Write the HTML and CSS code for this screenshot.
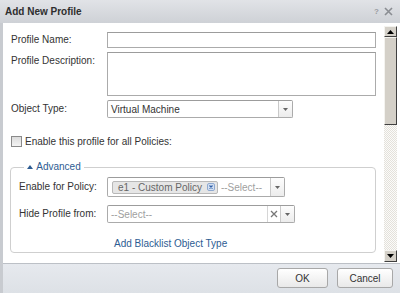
FILE: index.html
```html
<!DOCTYPE html>
<html>
<head>
<meta charset="utf-8">
<link rel="stylesheet" href="styles.css">
</head>
<body>
<div class="dialog">
  <div class="titlebar">
    <span class="title">Add New Profile</span>
    <span class="tools">
      <span class="help">?</span>
      <svg class="close" width="9" height="9" viewBox="0 0 9 9"><path d="M1 1L8 8M8 1L1 8" stroke="#8a8d92" stroke-width="1.6" fill="none"/></svg>
    </span>
  </div>
  <div class="body">
    <div class="form">
      <div class="row">
        <span class="lbl">Profile Name:</span>
        <div class="field input"></div>
      </div>
      <div class="row row-desc">
        <span class="lbl lbl-top">Profile Description:</span>
        <div class="field textarea"></div>
      </div>
      <div class="row row-type">
        <span class="lbl">Object Type:</span>
        <div class="field select select-type">
          <span class="val">Virtual Machine</span>
          <span class="arrow"><svg width="5" height="3" viewBox="0 0 5 3"><path d="M0 0H5L2.5 3Z" fill="#666"/></svg></span>
        </div>
      </div>
      <div class="check-row">
        <span class="checkbox"></span>
        <span>Enable this profile for all Policies:</span>
      </div>
      <fieldset class="advanced">
        <legend><svg width="6" height="4" viewBox="0 0 6 4"><path d="M0 4H6L3 0Z" fill="#2d5c92"/></svg> Advanced</legend>
        <div class="row">
          <span class="lbl lbl-in">Enable for Policy:</span>
          <div class="field select select-policy">
            <span class="tag">e1 - Custom Policy<svg class="tag-x" width="8" height="8" viewBox="0 0 8 8"><rect x="0.5" y="0.5" width="7" height="7" rx="1.5" fill="#d3e0f2" stroke="#8fa9d0"/><path d="M2.5 2.5L5.5 5.5M5.5 2.5L2.5 5.5" stroke="#2f5fa8" stroke-width="1.2"/></svg></span>
            <span class="ph">--Select--</span>
            <span class="arrow"><svg width="5" height="3" viewBox="0 0 5 3"><path d="M0 0H5L2.5 3Z" fill="#666"/></svg></span>
          </div>
        </div>
        <div class="row row-hide">
          <span class="lbl lbl-in">Hide Profile from:</span>
          <div class="field select select-hide">
            <span class="ph">--Select--</span>
            <span class="clear"><svg width="8" height="8" viewBox="0 0 8 8"><path d="M1 1L7 7M7 1L1 7" stroke="#777" stroke-width="1.3"/></svg></span>
            <span class="arrow"><svg width="5" height="3" viewBox="0 0 5 3"><path d="M0 0H5L2.5 3Z" fill="#666"/></svg></span>
          </div>
        </div>
        <div class="link-row"><a class="link">Add Blacklist Object Type</a></div>
      </fieldset>
    </div>
    <div class="scrollbar">
      <div class="sb-btn"><svg width="7" height="4" viewBox="0 0 7 4"><path d="M0 4H7L3.5 0Z" fill="#000"/></svg></div>
      <div class="sb-thumb"></div>
      <div class="sb-track"></div>
      <div class="sb-btn"><svg width="7" height="4" viewBox="0 0 7 4"><path d="M0 0H7L3.5 4Z" fill="#000"/></svg></div>
    </div>
  </div>
  <div class="footer">
    <button class="btn btn-ok">OK</button>
    <button class="btn btn-cancel">Cancel</button>
  </div>
</div>
</body>
</html>
```
FILE: styles.css
```css
html, body {
  margin: 0;
  padding: 0;
}
body {
  width: 400px;
  height: 293px;
  overflow: hidden;
  font: 10px "Liberation Sans", Arial, sans-serif;
  color: #333;
}
.dialog {
  width: 400px;
  height: 293px;
  background: #c8cbd0;
  display: flex;
  flex-direction: column;
}
.titlebar {
  height: 23px;
  flex: none;
  box-sizing: border-box;
  display: flex;
  align-items: center;
  justify-content: space-between;
  padding: 0 7px 0 5px;
  background: linear-gradient(#e1e3e7, #ced1d6);
}
.title {
  font-weight: bold;
  color: #2e2e2e;
}
.tools {
  display: flex;
  align-items: center;
  gap: 5px;
}
.help {
  font-size: 8px;
  font-weight: bold;
  color: #9a9ca0;
}
.body {
  height: 240px;
  flex: none;
  margin-left: 3px;
  background: #fff;
  display: flex;
}
.form {
  width: 381px;
  flex: none;
  box-sizing: border-box;
  padding: 9px 0 0 8px;
}
.row {
  display: flex;
  align-items: center;
}
.lbl {
  width: 96px;
  flex: none;
  line-height: 12px;
}
.lbl-top {
  align-self: flex-start;
  padding-top: 3px;
}
.lbl-in {
  width: 88px;
}
.field {
  box-sizing: border-box;
  border: 1px solid #ababab;
  border-top-color: #9c9c9c;
  background: #fff;
}
.input {
  width: 269px;
  height: 16px;
}
.row-desc {
  margin-top: 4px;
}
.textarea {
  width: 269px;
  height: 44px;
}
.row-type {
  margin-top: 4px;
}
.select {
  display: flex;
  align-items: center;
  border-radius: 2px;
}
.select-type {
  width: 186px;
  height: 18px;
}
.val {
  flex: 1;
  padding-left: 3px;
  color: #333;
}
.arrow {
  width: 13px;
  align-self: stretch;
  border-left: 1px solid #c9c9c9;
  background: linear-gradient(#fdfdfd, #ececec);
  display: flex;
  align-items: center;
  justify-content: center;
}
.check-row {
  margin-top: 17px;
  height: 12px;
  display: flex;
  align-items: center;
  gap: 3px;
}
.checkbox {
  width: 11px;
  height: 11px;
  box-sizing: border-box;
  border: 1px solid #8a8a8a;
  background: linear-gradient(#dcdcdc, #f4f4f4);
}
.advanced {
  margin: 14px 0 0 -1px;
  width: 366px;
  box-sizing: border-box;
  padding: 4px 8px 2px 8px;
  border: 1px solid #cfcfcf;
  border-radius: 4px;
}
.advanced legend {
  margin-left: 5px;
  padding: 0 3px;
  line-height: 12px;
  color: #2d5c92;
}
.advanced legend svg {
  vertical-align: 1px;
  margin-right: 1px;
}
.select-policy {
  width: 178px;
  height: 20px;
  padding-left: 4px;
}
.tag {
  display: flex;
  align-items: center;
  gap: 5px;
  height: 13px;
  box-sizing: border-box;
  padding: 0 2px 0 5px;
  border: 1px solid #b8b8b8;
  border-radius: 2px;
  background: #e6e6e6;
  color: #666;
}
.ph {
  flex: 1;
  color: #a0a0a0;
  padding-left: 3px;
}
.select-policy .ph {
  padding-left: 3px;
}
.row-hide {
  margin-top: 8px;
}
.select-hide {
  width: 188px;
  height: 18px;
}
.clear {
  width: 12px;
  align-self: stretch;
  border-left: 1px solid #d6d6d6;
  display: flex;
  align-items: center;
  justify-content: center;
}
.link-row {
  margin-top: 15px;
  line-height: 12px;
  padding-left: 95px;
}
.link {
  color: #2d5c92;
}
.scrollbar {
  width: 13px;
  flex: none;
  box-sizing: border-box;
  padding: 3px 0 1px;
  display: flex;
  flex-direction: column;
}
.sb-btn {
  height: 12px;
  flex: none;
  box-sizing: border-box;
  background: #d4d0c8;
  border: 1px solid;
  border-color: #f4f3ef #404040 #404040 #f4f3ef;
  display: flex;
  align-items: center;
  justify-content: center;
}
.sb-btn:first-child {
  height: 11px;
}
.sb-thumb {
  height: 88px;
  flex: none;
  box-sizing: border-box;
  background: #d4d0c8;
  border: 1px solid;
  border-color: #f4f3ef #404040 #404040 #f4f3ef;
}
.sb-track {
  flex: 1;
  background: repeating-conic-gradient(#e4e1da 0 25%, #fbfbfa 0 50%) 0 0 / 2px 2px;
}
.footer {
  height: 30px;
  flex: none;
  margin-left: 3px;
  box-sizing: border-box;
  border-top: 1px solid #bcc0c6;
  background: linear-gradient(#e6e9ee, #dde1e6);
  display: flex;
  justify-content: flex-end;
  align-items: flex-start;
  gap: 9px;
  padding: 4px 7px 0 0;
}
.btn {
  height: 20px;
  box-sizing: border-box;
  border: 1px solid #a8a8a8;
  border-radius: 3px;
  background: linear-gradient(#ffffff, #e9e9e9);
  font: 10px "Liberation Sans", Arial, sans-serif;
  color: #333;
  padding: 0;
}
.btn-ok {
  width: 51px;
}
.btn-cancel {
  width: 56px;
}
```
